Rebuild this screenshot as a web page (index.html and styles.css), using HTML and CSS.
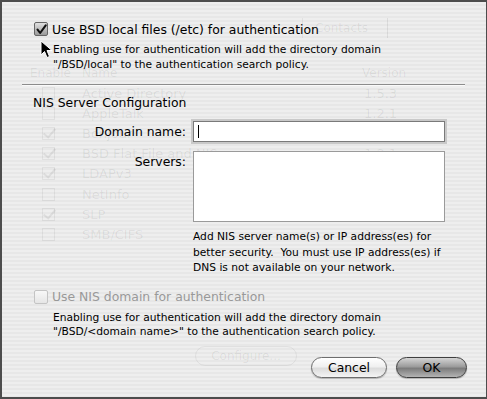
FILE: index.html
```html
<!DOCTYPE html>
<html lang="en">
<head>
    <meta charset="UTF-8">
    <title>BSD Configuration</title>
    <link rel="stylesheet" href="styles.css">
</head>
<body>
    <div class="sheet">
        <!-- faded window behind the sheet -->
        <div class="ghost">
            <div class="ghost-tab">Contacts</div>
            <div class="ghost-head"><span class="g-enable">Enable</span><span class="g-name">Name</span><span class="g-ver">Version</span></div>
            <ul class="ghost-list">
                <li><span class="g-box"></span><span class="g-name">Active Directory</span><span class="g-ver">1.5.3</span></li>
                <li><span class="g-box"></span><span class="g-name">AppleTalk</span><span class="g-ver">1.2.1</span></li>
                <li><span class="g-box on"></span><span class="g-name">Bonjour</span><span class="g-ver">1.2.1</span></li>
                <li><span class="g-box on"></span><span class="g-name">BSD Flat File and NIS</span><span class="g-ver">1.2.1</span></li>
                <li><span class="g-box on"></span><span class="g-name">LDAPv3</span><span class="g-ver"></span></li>
                <li><span class="g-box"></span><span class="g-name">NetInfo</span><span class="g-ver"></span></li>
                <li><span class="g-box on"></span><span class="g-name">SLP</span><span class="g-ver"></span></li>
                <li><span class="g-box"></span><span class="g-name">SMB/CIFS</span><span class="g-ver">1.2.1</span></li>
            </ul>
            <div class="ghost-btn">Configure...</div>
        </div>

        <div class="content">
            <label class="check">
                <span class="box checked">
                    <svg width="14" height="14" viewBox="0 0 14 14"><path d="M3 6.5 L6 10.5 L12.5 1.5" fill="none" stroke="#111" stroke-width="2.4" stroke-linecap="round" stroke-linejoin="round"/></svg>
                </span>
                <span>Use BSD local files (/etc) for authentication</span>
            </label>
            <p class="note">Enabling use for authentication will add the directory domain<br>"/BSD/local" to the authentication search policy.</p>

            <hr class="rule">

            <h2 class="heading">NIS Server Configuration</h2>

            <div class="form">
                <span class="lbl">Domain name:</span>
                <div class="field"><span class="caret"></span></div>
                <span class="lbl">Servers:</span>
                <div class="area"></div>
                <span></span>
                <p class="help">Add NIS server name(s) or IP address(es) for<br>better security.&nbsp; You must use IP address(es) if<br>DNS is not available on your network.</p>
            </div>

            <label class="check disabled">
                <span class="box"></span>
                <span>Use NIS domain for authentication</span>
            </label>
            <p class="note">Enabling use for authentication will add the directory domain<br>"/BSD/&lt;domain name&gt;" to the authentication search policy.</p>

            <div class="buttons">
                <button class="btn">Cancel</button>
                <button class="btn default">OK</button>
            </div>
        </div>

        <svg class="pointer" width="14" height="20" viewBox="0 0 14 20"><path d="M1 1 L1 15 L4.5 11.5 L7 17.5 L9.5 16.5 L7 10.5 L12 10.5 Z" fill="#000" stroke="#fff" stroke-width="1"/></svg>
    </div>
</body>
</html>
```

FILE: styles.css
```css
* {
    box-sizing: border-box;
}
body {
    margin: 0;
    font-family: "DejaVu Sans", sans-serif;
    color: #000;
}
.sheet {
    position: relative;
    width: 487px;
    height: 399px;
    border: 2px solid #4d4d4d;
    border-right-width: 1px;
    background: repeating-linear-gradient(to bottom, #eeeeee 0, #eeeeee 2px, #e7e7e7 2px, #e7e7e7 4px);
    overflow: hidden;
}

/* background window, faded */
.ghost {
    position: absolute;
    inset: 0;
    color: rgba(0, 0, 0, 0.075);
    font-size: 12px;
}
.ghost-tab {
    position: absolute;
    left: 300px;
    top: 16px;
    width: 86px;
    height: 20px;
    padding-left: 12px;
    line-height: 20px;
    border-left: 1px solid rgba(0, 0, 0, 0.05);
    border-right: 1px solid rgba(0, 0, 0, 0.07);
}
.ghost-head {
    position: absolute;
    left: 28px;
    top: 64px;
    display: flex;
}
.ghost-head .g-enable {
    width: 52px;
}
.g-name {
    width: 280px;
}
.ghost-list {
    position: absolute;
    left: 40px;
    top: 81px;
    margin: 0;
    padding: 0;
    list-style: none;
    font-size: 13px;
}
.ghost-list li {
    display: flex;
    align-items: center;
    height: 20.2px;
}
.g-box {
    width: 13px;
    height: 13px;
    margin-right: 27px;
    border: 1px solid rgba(0, 0, 0, 0.06);
    position: relative;
}
.g-box.on::after {
    content: "";
    position: absolute;
    left: 3px;
    top: -2px;
    width: 5px;
    height: 10px;
    border: solid rgba(0, 0, 0, 0.07);
    border-width: 0 2px 2px 0;
    transform: rotate(40deg);
}
.ghost-list .g-name {
    width: 282px;
}
.ghost-btn {
    position: absolute;
    left: 193px;
    top: 344px;
    width: 102px;
    height: 20px;
    border: 1px solid rgba(0, 0, 0, 0.06);
    border-radius: 10px;
    text-align: center;
    line-height: 18px;
}

.content {
    position: relative;
    display: flex;
    flex-direction: column;
    padding: 19px 0 0 32px;
    font-size: 12.4px;
}
.check {
    display: flex;
    align-items: center;
    gap: 4px;
    height: 16px;
}
.check.disabled {
    color: #999;
    margin-top: 13px;
}
.box {
    width: 14px;
    height: 14px;
    border: 1px solid #8a8a8a;
    border-radius: 2px;
    background: linear-gradient(#fdfdfd, #d6d6d6);
    display: flex;
}
.box.checked {
    background: linear-gradient(#e0e0e0, #9a9a9a);
    border-color: #666;
}
.disabled .box {
    border-color: #c4c4c4;
    background: linear-gradient(#f8f8f8, #e6e6e6);
}
.note {
    margin: 6px 0 0 19px;
    font-size: 10.7px;
    line-height: 14.5px;
}
.rule {
    margin: 12px 0 0 -12px;
    width: 443px;
    border: 0;
    border-top: 1px solid #8c8c8c;
    border-bottom: 1px solid #fafafa;
}
.heading {
    margin: 9px 0 0 -1px;
    font-size: 12.4px;
    font-weight: normal;
    line-height: 16px;
}
.form {
    display: grid;
    grid-template-columns: 152px 252px;
    column-gap: 7px;
    row-gap: 9px;
    margin-top: 10px;
}
.lbl {
    text-align: right;
    line-height: 21px;
}
.field {
    height: 21px;
    background: #fff;
    border: 1px solid #7a7a7a;
    box-shadow: 0 0 0 2px #c9c9c9;
    padding: 3px 4px;
}
.caret {
    display: block;
    width: 1px;
    height: 13px;
    background: #000;
}
.area {
    height: 71px;
    background: #fff;
    border: 1px solid #9a9a9a;
}
.help {
    margin: -2px 0 0 0;
    font-size: 10.7px;
    line-height: 15.5px;
}
.buttons {
    display: flex;
    justify-content: flex-end;
    gap: 9px;
    margin: 17px 19px 0 0;
}
.btn {
    height: 21px;
    border-radius: 11px;
    font-family: "DejaVu Sans", sans-serif;
    font-size: 12.4px;
    padding: 0;
    border: 1px solid #6d6d6d;
    background: linear-gradient(#ffffff 0%, #f0f0f0 45%, #dcdcdc 55%, #f4f4f4 100%);
    box-shadow: 0 1px 1px rgba(0, 0, 0, 0.25);
    width: 76px;
}
.btn.default {
    width: 71px;
    border-color: #3e3e3e;
    background: linear-gradient(#d4d4d4 0%, #9c9c9c 45%, #7c7c7c 55%, #b4b4b4 100%);
}
.pointer {
    position: absolute;
    left: 38px;
    top: 38px;
}
```
